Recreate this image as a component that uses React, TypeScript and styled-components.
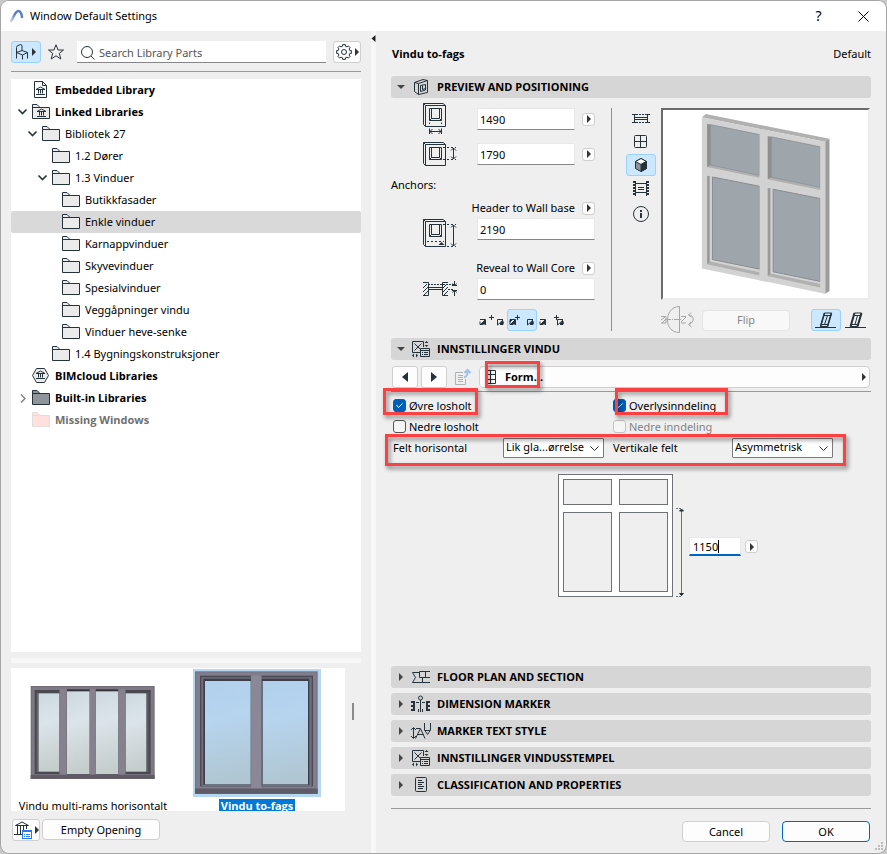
import React from 'react';
import styled, { createGlobalStyle, css } from 'styled-components';

const ink = '#26323a';
const FONT = '"Noto Sans", "Open Sans", "Liberation Sans", sans-serif';
const BOLD_FONT = '"Open Sans", "Noto Sans", "Liberation Sans", sans-serif';

const Global = createGlobalStyle`
  * { box-sizing: border-box; }
  body {
    margin: 0;
    background: #c9c9c9;
    font-family: ${FONT};
    font-size: 11px;
    line-height: 16px;
    color: #000;
  }
  button, input, select { font: inherit; color: inherit; }
`;

const bold = css`
  font-family: ${BOLD_FONT};
  font-weight: 700;
`;

/* ---------- window shell ---------- */

const Desktop = styled.div`
  display: flex;
  min-height: 100vh;
  padding: 1px;
`;

const Dialog = styled.main`
  position: relative;
  flex: 1;
  display: flex;
  flex-direction: column;
  min-width: 0;
  background: #efefef;
  border-radius: 8px;
  overflow: hidden;
  box-shadow: 0 0 0 1px #a6a6a6;
`;

const TitleBar = styled.header`
  display: flex;
  align-items: center;
  gap: 6px;
  height: 30px;
  padding-left: 8px;
  background: #fff;
`;

const WindowTitle = styled.h1`
  flex: 1;
  margin: 0;
  font-size: 11px;
  font-weight: 400;
`;

const CaptionButtons = styled.div`
  display: flex;
`;

const CaptionButton = styled.button`
  display: grid;
  place-items: center;
  width: 45px;
  height: 30px;
  padding: 0;
  border: 0;
  background: none;
  font-size: 14px;
`;

const Body = styled.div`
  flex: 1;
  display: grid;
  grid-template-columns: 370px 5px minmax(0, 1fr);
`;

const Splitter = styled.div`
  background: #f7f7f7;
`;

const SplitterArrow = styled.svg`
  display: block;
  margin-top: 4px;
`;

const Sidebar = styled.section`
  display: flex;
  flex-direction: column;
  padding: 10px 10px 12px;
`;

const Settings = styled.section`
  display: flex;
  flex-direction: column;
  padding: 0 15px 11px;
`;

const Rule = styled.hr<{ $top?: number }>`
  width: 100%;
  height: 1px;
  margin: ${p => p.$top ?? 0}px 0 0;
  border: 0;
  background: #999;
`;

/* ---------- controls ---------- */

const Icon = styled.svg`
  display: block;
  flex: none;
  fill: none;
  stroke: ${ink};
  overflow: visible;
`;

const selectedTool = css`
  border-color: #99d1ff;
  background: #cce8ff;
`;

const ToolButton = styled.button<{ $selected?: boolean; $framed?: boolean; $width?: number }>`
  display: flex;
  flex: none;
  align-items: center;
  justify-content: center;
  gap: 3px;
  width: ${p => p.$width ?? 30}px;
  height: 22px;
  padding: 0;
  border: 1px solid transparent;
  border-radius: 3px;
  background: none;
  ${p => p.$framed && css`border-color: #cfcfcf; background: #fdfdfd;`}
  ${p => p.$selected && selectedTool}
`;

const PushButton = styled.button<{ $width: number; $primary?: boolean }>`
  width: ${p => p.$width}px;
  height: 21px;
  padding: 0;
  border: 1px solid ${p => (p.$primary ? '#0067c0' : '#cfcfcf')};
  border-radius: 4px;
  background: #fdfdfd;
  line-height: 16px;
  &:disabled { border-color: #e4e4e4; background: #f8f8f8; color: #888; }
`;

const PopButton = styled.button`
  display: grid;
  place-items: center;
  flex: none;
  width: 13px;
  height: 13px;
  padding: 0;
  border: 1px solid #cfcfcf;
  border-radius: 3px;
  background: #fdfdfd;
`;

const TextField = styled.input`
  width: 100%;
  height: 22px;
  padding: 0 2px;
  border: 1px solid #e8e8e8;
  border-bottom-color: #868686;
  background: #fff;
  outline: 0;
`;

const Marker = styled.span<{ $inset: string }>`
  position: absolute;
  inset: ${p => p.$inset};
  border: 3px solid #fb4141;
  filter: drop-shadow(2px 3px 2px rgba(0, 0, 0, 0.45));
  pointer-events: none;
  z-index: 1;
`;

const TriRight = () => (
  <Icon width="4" height="8" viewBox="0 0 4 8"><path d="M0 0L4 4L0 8Z" fill="#333" stroke="none" /></Icon>
);

/* ---------- sidebar ---------- */

const SearchRow = styled.div`
  display: flex;
  align-items: center;
  gap: 7px;
  margin-bottom: 8px;
`;

const StarButton = styled(ToolButton)`
  margin-right: 6px;
`;

const SearchBox = styled.label`
  display: flex;
  flex: 1;
  align-items: center;
  gap: 4px;
  height: 22px;
  padding: 2px 0 0 4px;
  border-bottom: 1px solid #868686;
  background: #fff;
`;

const SearchInput = styled.input`
  flex: 1;
  min-width: 0;
  padding: 0;
  border: 0;
  outline: 0;
  background: none;
  &::placeholder { color: #555; opacity: 1; }
`;

const Tree = styled.ul`
  flex: 1;
  margin: 7px 0 0;
  padding: 0;
  background: #fff;
  list-style: none;
`;

const TreeRow = styled.li<{ $depth: number; $bold?: boolean; $selected?: boolean; $muted?: boolean }>`
  display: flex;
  align-items: center;
  gap: 4px;
  height: 22px;
  padding-left: ${p => 7 + p.$depth * 10}px;
  border-radius: 2px;
  background: ${p => (p.$selected ? '#d9d9d9' : 'none')};
  color: ${p => (p.$muted ? '#707070' : '#000')};
  ${p => p.$bold && bold}
`;

const TwistySlot = styled.span`
  width: 10px;
`;

const GlyphSlot = styled.span<{ $indent: number }>`
  width: 19px;
  padding-left: ${p => p.$indent}px;
`;

const Sash = styled.div`
  height: 5px;
  margin: 6px 0 5px;
  background: #f7f7f7;
`;

const GalleryRow = styled.div`
  display: flex;
  align-items: flex-start;
`;

const Gallery = styled.div`
  display: grid;
  grid-template-columns: 164px 164px;
  flex: none;
  width: 334px;
  height: 143px;
  overflow: hidden;
  background: #fff;
`;

const ScrollThumb = styled.div`
  width: 2px;
  height: 17px;
  margin: 35px 0 0 7px;
  background: #8a8a8a;
`;

const Thumb = styled.figure`
  display: flex;
  flex-direction: column;
  align-items: center;
  margin: 0;
  padding-top: 1px;
`;

const ThumbCaption = styled.figcaption<{ $selected?: boolean }>`
  margin-top: 2px;
  padding: 0 2px;
  line-height: 13px;
  white-space: nowrap;
  ${p => p.$selected && css`background: #0078d7; color: #fff; ${bold}`}
`;

const SidebarFooter = styled.div`
  display: flex;
  gap: 2px;
  margin: 8px 0 0 1px;
`;

type NodeIcon = 'doc' | 'lib' | 'folder' | 'cloud' | 'dark' | 'missing';
type TreeNode = { label: string; depth: number; icon: NodeIcon; open?: boolean; closed?: boolean; bold?: boolean; selected?: boolean };

const nodes: TreeNode[] = [
  { label: 'Embedded Library', depth: 0, icon: 'doc', bold: true },
  { label: 'Linked Libraries', depth: 0, icon: 'lib', open: true, bold: true },
  { label: 'Bibliotek 27', depth: 1, icon: 'folder', open: true },
  { label: '1.2 Dører', depth: 2, icon: 'folder' },
  { label: '1.3 Vinduer', depth: 2, icon: 'folder', open: true },
  { label: 'Butikkfasader', depth: 3, icon: 'folder' },
  { label: 'Enkle vinduer', depth: 3, icon: 'folder', selected: true },
  { label: 'Karnappvinduer', depth: 3, icon: 'folder' },
  { label: 'Skyvevinduer', depth: 3, icon: 'folder' },
  { label: 'Spesialvinduer', depth: 3, icon: 'folder' },
  { label: 'Veggåpninger vindu', depth: 3, icon: 'folder' },
  { label: 'Vinduer heve-senke', depth: 3, icon: 'folder' },
  { label: '1.4 Bygningskonstruksjoner', depth: 2, icon: 'folder' },
  { label: 'BIMcloud Libraries', depth: 0, icon: 'cloud', bold: true },
  { label: 'Built-in Libraries', depth: 0, icon: 'dark', closed: true, bold: true },
  { label: 'Missing Windows', depth: 0, icon: 'missing', bold: true },
];

const building = 'M0 3.5L4.5 1L9 3.5M0 3.5H9M2.5 4V7.5M4.5 4V7.5M6.5 4V7.5M0 8.5H9';

const NodeGlyph = ({ kind }: { kind: NodeIcon }) => {
  if (kind === 'doc')
    return (
      <Icon width="13" height="18" viewBox="0 0 13 18">
        <path d="M.5 .5H8.5L12.5 4.5V16.5H.5Z" fill="#fff" />
        <path d="M8.5 .5V4.5H12.5" />
        <path d={building} transform="translate(2 5)" />
      </Icon>
    );
  if (kind === 'cloud')
    return (
      <Icon width="17" height="16" viewBox="0 0 17 16">
        <path d="M4.5 .5H12.5L16.5 7.5L12.5 14.5H4.5L.5 7.5Z" fill="#ebebeb" />
        <path d={building} transform="translate(4 2)" />
      </Icon>
    );
  const fill = kind === 'dark' ? '#8e9499' : kind === 'missing' ? '#ffe0dc' : '#ebebeb';
  const stroke = kind === 'missing' ? '#e3dcdc' : ink;
  return (
    <Icon width="18" height="16" viewBox="0 0 18 16">
      <path d="M.5 14.5V.5H5L8 3.5H17.5V14.5Z" fill={fill} stroke={stroke} />
      <path d="M.5 3.5H8" stroke={stroke} />
      {kind === 'lib' && <path d={building} transform="translate(5 4)" />}
    </Icon>
  );
};

const Chair = () => (
  <Icon width="13" height="16" viewBox="0 0 13 16">
    <path d="M.5 14.5V3.5Q.5 2 2 1.500L4.500 .500Q6 .500 6 2V6.500M.500 8.500L6 6.500L11.500 8.500L6.500 11L.500 8.500M6.500 11V15.500M11.500 8.500V14.500" />
  </Icon>
);

const Star = () => (
  <Icon width="16" height="16" viewBox="0 0 16 16">
    <path d="M8 .8L10.100 6H15.500L11.300 9.400L12.800 15L8 11.800L3.200 15L4.700 9.400L.500 6H5.900Z" />
  </Icon>
);

const gearPath = Array.from({ length: 8 }, (_, i) => {
  const pt = (r: number, deg: number) => {
    const a = ((i * 45 + deg) * Math.PI) / 180;
    return `${(8 + r * Math.cos(a)).toFixed(2)} ${(8 + r * Math.sin(a)).toFixed(2)}`;
  };
  return `${i ? 'L' : 'M'}${pt(6, -13)}L${pt(7.5, -11)}L${pt(7.5, 11)}L${pt(6, 13)}`;
}).join('') + 'Z';

const Gear = () => (
  <Icon width="16" height="16" viewBox="0 0 16 16" strokeLinejoin="round">
    <path d={gearPath} />
    <circle cx="8" cy="8" r="2.5" />
  </Icon>
);

const MultiWindow = () => (
  <Icon width="128" height="128" viewBox="87 87 384 384">
    <defs>
      <linearGradient id="glassA" x1="0" y1="0" x2=".1" y2="1">
        <stop offset="0" stopColor="#cdd8df" /><stop offset=".4" stopColor="#dbe4ea" /><stop offset="1" stopColor="#c6cdcd" />
      </linearGradient>
    </defs>
    <g stroke="none">
      <rect x="92" y="138" width="372" height="279" fill="#716e78" />
      <rect x="95" y="141" width="366" height="262" fill="#7d7a85" />
      <rect x="104" y="150" width="75" height="252" fill="#4a4950" />
      <rect x="376" y="150" width="76" height="252" fill="#4a4950" />
      <rect x="200" y="148" width="70" height="255" fill="#35343a" />
      <rect x="286" y="148" width="70" height="255" fill="#35343a" />
      <rect x="110" y="158" width="6" height="238" fill="#68656e" />
      <rect x="440" y="158" width="6" height="238" fill="#5b5962" />
      <rect x="116" y="160" width="62" height="235" fill="url(#glassA)" />
      <rect x="201" y="154" width="68" height="248" fill="url(#glassA)" />
      <rect x="287" y="154" width="68" height="248" fill="url(#glassA)" />
      <rect x="377" y="160" width="62" height="235" fill="url(#glassA)" />
      <rect x="179" y="147" width="21" height="256" fill="#85828d" />
      <rect x="269" y="147" width="18" height="256" fill="#85828d" />
      <rect x="355" y="147" width="21" height="256" fill="#85828d" />
      <rect x="92" y="405" width="372" height="11" fill="#5f5c66" />
    </g>
  </Icon>
);

const TwoWindow = () => (
  <Icon width="128" height="128" viewBox="579 87 384 384">
    <defs>
      <linearGradient id="glassB" x1="0" y1="0" x2=".1" y2="1">
        <stop offset="0" stopColor="#b1d0ec" /><stop offset=".4" stopColor="#b6d4ee" /><stop offset="1" stopColor="#b0c6d2" />
      </linearGradient>
    </defs>
    <g stroke="none">
      <rect x="579" y="87" width="384" height="384" fill="#b5d7f2" />
      <rect x="585" y="94" width="368" height="368" fill="#74727f" />
      <rect x="588" y="97" width="362" height="348" fill="#807e8c" />
      <rect x="600" y="107" width="153" height="332" fill="#4a4b57" />
      <rect x="784" y="107" width="155" height="332" fill="#4a4b57" />
      <rect x="604" y="112" width="149" height="327" fill="#716f7d" />
      <rect x="785" y="112" width="150" height="327" fill="#716f7d" />
      <rect x="610" y="116" width="143" height="318" fill="#3c3e49" />
      <rect x="786" y="116" width="142" height="318" fill="#3c3e49" />
      <rect x="615" y="123" width="137" height="310" fill="url(#glassB)" />
      <rect x="788" y="123" width="136" height="310" fill="url(#glassB)" />
      <rect x="754" y="107" width="30" height="338" fill="#8a8896" />
      <rect x="585" y="446" width="368" height="15" fill="#5d5b68" />
    </g>
  </Icon>
);

const LibraryManager = () => (
  <Icon width="18" height="18" viewBox="0 0 18 18">
    <path d="M1.500 4.500L8 1L14.500 4.500ZM3.500 5V13M6.500 5V13M9.500 5V9M12.500 5V8M0 13.500H8" />
    <rect x="8.500" y="9.500" width="9" height="8" fill="#fff" stroke="#2a78ee" />
    <path d="M8.500 10.500H17.500M10 13.500H11M12 13.500H16M10 15.500H11M12 15.500H16" stroke="#2a78ee" />
  </Icon>
);

const LibraryPanel = () => (
  <Sidebar>
    <SearchRow>
      <ToolButton $selected aria-label="Library view"><Chair /><TriRight /></ToolButton>
      <StarButton $width={16} aria-label="Favorites"><Star /></StarButton>
      <SearchBox>
        <Icon width="14" height="14" viewBox="0 0 14 14"><circle cx="6" cy="6" r="5.5" /><path d="M10 10L13.500 13.500" /></Icon>
        <SearchInput placeholder="Search Library Parts" aria-label="Search Library Parts" />
      </SearchBox>
      <ToolButton $framed $width={28} aria-label="Search settings"><Gear /><TriRight /></ToolButton>
    </SearchRow>
    <Rule />
    <Tree>
      {nodes.map(n => (
        <TreeRow key={n.label} $depth={n.depth} $bold={n.bold} $selected={n.selected} $muted={n.icon === 'missing'}>
          <TwistySlot>
            {n.open && <Icon width="9" height="6" viewBox="0 0 9 6" strokeWidth="1.6"><path d="M.5 .5L4.500 4.500L8.500 .500" /></Icon>}
            {n.closed && <Icon width="10" height="9" viewBox="0 0 10 9" strokeWidth="1.500"><path d="M3 .500L7 4.500L3 8.500" stroke="#858585" /></Icon>}
          </TwistySlot>
          <GlyphSlot $indent={n.icon === 'doc' ? 2 : 0}><NodeGlyph kind={n.icon} /></GlyphSlot>
          {n.label}
        </TreeRow>
      ))}
    </Tree>
    <Sash />
    <GalleryRow>
      <Gallery>
        <Thumb><MultiWindow /><ThumbCaption>Vindu multi-rams horisontalt</ThumbCaption></Thumb>
        <Thumb><TwoWindow /><ThumbCaption $selected>Vindu to-fags</ThumbCaption></Thumb>
      </Gallery>
      <ScrollThumb />
    </GalleryRow>
    <SidebarFooter>
      <ToolButton $framed $width={28} aria-label="Library manager"><LibraryManager /><TriRight /></ToolButton>
      <PushButton $width={118}>Empty Opening</PushButton>
    </SidebarFooter>
  </Sidebar>
);

/* ---------- settings: headers ---------- */

const PartHeading = styled.div`
  display: flex;
  align-items: center;
  justify-content: space-between;
  height: 45px;
  padding-left: 1px;
`;

const PartName = styled.h2`
  margin: 0;
  font-size: 11px;
  ${bold}
`;

const SectionBar = styled.button`
  display: flex;
  flex: none;
  align-items: center;
  width: 100%;
  height: 22px;
  padding: 0 0 0 5px;
  border: 0;
  border-radius: 3px;
  background: #d6d6d6;
  text-align: left;
  ${bold}
`;

const BarArrow = styled.span`
  display: grid;
  place-items: center;
  width: 10px;
`;

const BarIcon = styled.span`
  display: grid;
  place-items: center;
  width: 20px;
  margin: 0 6px 0 5px;
`;

const PreviewIcon = () => (
  <Icon width="14" height="16" viewBox="0 0 14 16">
    <path d="M.5 3.500L4.500 4.500V15.500L.500 12.500ZM.500 3.500L9 .500L13.500 1.500V13.500L4.500 15.500M4.500 4.500L13.500 1.500" />
    <path d="M6.500 6.500L11.500 5.500V11L6.500 12.500ZM8.500 6.500V10.500L11.500 9.500" />
  </Icon>
);
const ParamsIcon = () => (
  <Icon width="18" height="16" viewBox="0 0 18 16">
    <path d="M8 11.500H.500V.500H11.500V6M2.500 2.500L9.500 9.500M9.500 2.500L2.500 9.500" />
    <path d="M8.500 7.500H17.500V15.500H8.500ZM8.500 9.500H17.500M10 11.500H11M12 11.500H16M10 13.500H11M12 13.500H16" />
    <path d="M12.500 2L14.500 0L16.500 2ZM12.500 4L14.500 6L16.500 4ZM2 12.500L0 14.500L2 16.500ZM4 12.500L6 14.500L4 16.500Z" fill={ink} stroke="none" />
  </Icon>
);
const FloorIcon = () => (
  <Icon width="18" height="12" viewBox="0 0 18 12">
    <path d="M8 1.500H.500L3.500 6.500L.500 11.500H18M7.500 .500V6.500H18M7.500 .500H18M13.500 .500V6.500M10.500 6.500V11.500" />
  </Icon>
);
const DimensionIcon = () => (
  <Icon width="20" height="16" viewBox="0 0 20 16">
    <circle cx="9.500" cy="2" r="2" />
    <path d="M9.500 4V16M7.500 13V16M11.500 13V16M5 6.500H8M11 6.500H14" />
    <path d="M0 5H4V15H0V13H2V11H0V9H2V7H0ZM15 5H19V7H17V9H19V11H17V13H19V15H15Z" fill={ink} stroke="none" />
  </Icon>
);
const MarkerTextIcon = () => (
  <Icon width="20" height="16" viewBox="0 0 20 16">
    <path d="M2.500 5V15M0 7L2.500 4.500L5 7M0 13L2.500 15.500L5 13M5 5.500H9M4.500 15.500L9.500 5.500L14 15.500M6.500 11.500H12.500" />
    <path d="M13.500 0V7L16.500 11.500L19.500 7V0M14 7.500H19" />
  </Icon>
);
const DocIcon = () => (
  <Icon width="12" height="16" viewBox="0 0 12 16">
    <rect x=".5" y=".5" width="11" height="14" rx="1" />
    <path d="M3 3.500H7M3 5.500H9M3 7.500H7M3 9.500H9M3 11.500H8" />
  </Icon>
);

const Section = ({ title, icon, open }: { title: string; icon: React.ReactNode; open?: boolean }) => (
  <SectionBar aria-expanded={!!open}>
    <BarArrow>
      <Icon width="8" height="8" viewBox="0 0 8 8">
        <path d={open ? 'M0 2H8L4 6Z' : 'M2 0L6 4L2 8Z'} fill="#444" stroke="none" />
      </Icon>
    </BarArrow>
    <BarIcon>{icon}</BarIcon>
    {title}
  </SectionBar>
);

/* ---------- settings: preview and positioning ---------- */

const Positioning = styled.div`
  display: grid;
  grid-template-columns: 221px 48px minmax(0, 1fr);
  align-items: start;
  padding: 10px 0 4px;
`;

const SizeForm = styled.div`
  display: grid;
  grid-template-columns: 86px 98px 20px;
  grid-template-rows: 22px 13px 22px 12px 16px 7px 16px 2px 22px 7px 13px 16px 2px 22px 9px 22px;
  border-right: 1px solid #8f8f8f;
`;

const Place = styled.div<{ $row: string; $col: string; $align?: string }>`
  display: flex;
  grid-row: ${p => p.$row};
  grid-column: ${p => p.$col};
  align-items: center;
  justify-content: ${p => p.$align ?? 'flex-start'};
  white-space: nowrap;
`;

const IconPlace = styled(Place)`
  padding-left: 32px;
`;

const LabelPlace = styled(Place)`
  justify-content: flex-end;
`;

const AnchorRow = styled.div`
  display: flex;
  align-items: center;
`;

const ViewColumn = styled.div`
  display: flex;
  flex-direction: column;
  gap: 1px;
  padding-left: 14px;
`;

const InfoButton = styled(ToolButton)`
  margin-top: 3px;
`;

const ViewFrame = styled.div`
  height: 192px;
  margin-right: 1px;
  border: 2px solid #ececec;
  border-top-color: #6b6b6b;
  border-left-color: #6b6b6b;
  background: #fff;
`;

const ViewSvg = styled.svg`
  display: block;
  width: 100%;
  height: 100%;
`;

const FlipRow = styled.div`
  display: flex;
  align-items: center;
  gap: 7px;
  margin-top: 6px;
`;

const SlantGroup = styled.div`
  display: flex;
  margin-left: auto;
`;

const WallHole = ({ drop = 0 }: { drop?: number }) => (
  <>
    <path d={`M2.500 2.500H22.500V${23.5 + drop}H2.500ZM2.500 2.500L.500 .500H20L22.500 2.500M.500 .500V${21.5 + drop}L2.500 ${23.5 + drop}`} />
    <path d="M6.500 5.500H18.500V17.500H6.500ZM8.500 5.500V15.500M16.500 5.500V15.500M6.500 17.500L8.500 15.500H16.500L18.500 17.500" />
  </>
);

const WidthIcon = () => (
  <Icon width="24" height="32" viewBox="0 0 24 32">
    <WallHole />
    <path d="M6.500 19.500V21M18.500 19.500V21M6.500 25.500V31M18.500 25.500V31M7 28.500H18M9.500 26L7 28.500L9.500 31M15.500 26L18 28.500L15.500 31" />
  </Icon>
);
const HeightIcon = () => (
  <Icon width="34" height="24" viewBox="0 0 34 24">
    <WallHole />
    <path d="M20 5.500H33M20 17.500H33" strokeDasharray="2 2" />
    <path d="M30.500 6V17M28 8.500L30.500 6L33 8.500M28 14.500L30.500 17L33 14.500" />
  </Icon>
);
const HeaderIcon = () => (
  <Icon width="34" height="28" viewBox="0 0 34 28">
    <WallHole drop={4} />
    <path d="M20 5.500H33M4 22.500H21M24 27.500H33" strokeDasharray="2 2" />
    <path d="M30.500 6V27M28 8.500L30.500 6L33 8.500M28 24.500L30.500 27L33 24.500" />
    <path d="M15.500 26L18.500 23L21.500 26Z" fill={ink} stroke="none" />
  </Icon>
);
const RevealIcon = () => (
  <Icon width="34" height="16" viewBox="0 0 34 16">
    <path d="M0 1.500H5.500V14.500H0M25 1.500H19.500V14.500H25M5.500 6.500H20M5.500 8.500H20M0 7L4 3M0 11L5 6M1 14L5 10M20 7L24 3M20 11L25 6M21 14L25 10" />
    <path d="M5 3.500H31M25 8.500H31" strokeDasharray="2 1" />
    <path d="M31.500 0V5M31.500 9V15M29 4.500H34M29 9.500H34M29.500 2.500L31.500 5L33.500 2.500M29.500 11.500L31.500 9L33.500 11.500" />
  </Icon>
);

const AnchorIcon = ({ cross, near }: { cross: number; near?: boolean }) => (
  <Icon width="26" height="10" viewBox="0 0 26 10">
    <path d="M1 4.500H6.500V10M1 10L6 5M1 6.500V9.500H4" />
    <path d="M24 4.500H18.500V10M18.500 10L24 5M21 9.500H24V7" />
    <path d="M3 9L6 6V9ZM21 9L24 6V9Z" fill={ink} />
    {near && <path d="M1 4.500V7L3.500 4.500Z" fill={ink} />}
    <path d={`M${cross} 0V5M${cross - 2.5} 2.500H${cross + 2.5}`} />
  </Icon>
);

const PlanView = () => (
  <Icon width="18" height="10" viewBox="0 0 18 10">
    <path d="M0 .5H4M0 8.500H4M14 .500H18M14 8.500H18M2.500 .500V8.500M15.500 .500V8.500M3 3.500H15M3 5.500H15" />
    <path d="M4 .5H14M4 8.500H14" strokeDasharray="2 1" />
  </Icon>
);
const ElevationView = () => (
  <Icon width="14" height="14" viewBox="0 0 14 14"><rect x=".5" y=".5" width="12" height="12" rx="1" /><path d="M6.500 .5V12.500M.500 6.500H12.500" /></Icon>
);
const CubeView = () => (
  <Icon width="12" height="14" viewBox="0 0 12 14">
    <path d="M6 .5L11.500 3.500V10.500L6 13.500L.500 10.500V3.500Z" fill="#8d959b" />
    <path d="M.5 3.500L6 .500L11.500 3.500L6 6.500Z" fill="#fff" />
    <path d="M6 6.500L11.500 3.500V10.500L6 13.500Z" fill={ink} />
  </Icon>
);
const FilmView = () => (
  <Icon width="16" height="16" viewBox="0 0 16 16">
    <path d="M1 1V16M15 1V16" strokeWidth="2" strokeDasharray="2 1" />
    <path d="M2.500 1V16M13.500 1V16M3 3.500H13M3 12.500H13M5 7.500H11M5 9.500H11" />
  </Icon>
);
const InfoView = () => (
  <Icon width="16" height="16" viewBox="0 0 16 16">
    <circle cx="8" cy="8" r="7.500" /><path d="M8 7V12M8 4V6" strokeWidth="2" />
  </Icon>
);
const OpeningIcon = () => (
  <Icon width="34" height="28" viewBox="0 0 34 28">
    <g stroke="#a6a6a6">
      <path d="M18.500 .500C10 .500 6.500 8 6.500 14S10 26.500 18.500 26.500ZM0 10.500H5V17H0M0 14L4 11M1 17L5 13M20 10.500H25M20 17H25M20 16L25 11" />
      <path d="M5 13.500H20" strokeDasharray="5 1 1 1" />
      <path d="M28 9C33 9 34 16 28 18.500M30 6.500L27.500 9L30.500 11M30 16L27.500 18.500L30.500 21" />
    </g>
  </Icon>
);
const SlantIcon = ({ tight }: { tight?: boolean }) => (
  <Icon width="22" height="16" viewBox="0 0 22 16">
    <path d="M0 15.500H21" />
    <path d="M9.500 1H16.500L12.500 14.500H5.500ZM9 3.500H16M6 12.500H13" />
    <path d={tight ? 'M12.500 3.500L9.500 12.500' : 'M12.500 3.500L10 12.500'} />
    <path d="M9.500 1L5.500 14.500M16.500 1L12.500 14.500" strokeWidth={tight ? 1.5 : 2} />
  </Icon>
);

const Preview3D = () => (
  <ViewSvg viewBox="99 120 618 567" role="img" aria-label="3D preview">
    <path d="M216 142L228 132L601 207L588 216Z" fill="#b0b0b0" />
    <path d="M588 216L601 207V666L588 674Z" fill="#9c9c9c" />
    <path d="M216 142L588 216V674L216 598Z" fill="#d2d2d2" />
    <path d="M232 162L390 194V324L232 292Z" fill="#b0b0b0" />
    <path d="M232 162L242 164V286L232 292Z" fill="#8f8f8f" />
    <path d="M242 164L390 194V317L242 286Z" fill="#9ea5ab" stroke="#888d92" strokeWidth="2" />
    <path d="M414 199L573 231V361L414 329Z" fill="#b0b0b0" />
    <path d="M414 199L426 201V323L414 329Z" fill="#8f8f8f" />
    <path d="M426 201L573 231V353L426 323Z" fill="#9ea5ab" stroke="#888d92" strokeWidth="2" />
    <path d="M232 318L390 350V619L232 585Z" fill="#b0b0b0" />
    <path d="M232 318L240 320V577L232 585Z" fill="#999" />
    <path d="M240 320L390 350V609L240 577Z" fill="#d2d2d2" />
    <path d="M248 322L390 350V600L248 571Z" fill="#9ea5ab" stroke="#888d92" strokeWidth="3" />
    <path d="M414 355L573 387V655L414 621Z" fill="#b0b0b0" />
    <path d="M414 355L423 357V613L414 621Z" fill="#999" />
    <path d="M423 357L573 387V645L423 613Z" fill="#d2d2d2" />
    <path d="M431 359L573 387V637L431 608Z" fill="#9ea5ab" stroke="#888d92" strokeWidth="3" />
    <path d="M390 177L414 182V639L390 634ZM573 213L588 216V674L573 671Z" fill="#d2d2d2" />
  </ViewSvg>
);

const ViewPane = styled.div`
  min-width: 0;
  padding-left: 1px;
`;

const PositioningPanel = () => (
  <Positioning>
    <SizeForm>
      <IconPlace $row="1" $col="1"><WidthIcon /></IconPlace>
      <Place $row="1" $col="2"><TextField defaultValue="1490" aria-label="Width" /></Place>
      <Place $row="1" $col="3" $align="flex-end"><PopButton aria-label="Width options"><TriRight /></PopButton></Place>
      <IconPlace $row="3" $col="1"><HeightIcon /></IconPlace>
      <Place $row="3" $col="2"><TextField defaultValue="1790" aria-label="Height" /></Place>
      <Place $row="3" $col="3" $align="flex-end"><PopButton aria-label="Height options"><TriRight /></PopButton></Place>
      <Place $row="5" $col="1">Anchors:</Place>
      <LabelPlace $row="7" $col="1 / span 2"><label htmlFor="header">Header to Wall base</label></LabelPlace>
      <Place $row="7" $col="3" $align="flex-end"><PopButton aria-label="Header options"><TriRight /></PopButton></Place>
      <IconPlace $row="9 / span 2" $col="1"><HeaderIcon /></IconPlace>
      <Place $row="9" $col="2 / span 2"><TextField id="header" defaultValue="2190" /></Place>
      <LabelPlace $row="12" $col="1 / span 2"><label htmlFor="reveal">Reveal to Wall Core</label></LabelPlace>
      <Place $row="12" $col="3" $align="flex-end"><PopButton aria-label="Reveal options"><TriRight /></PopButton></Place>
      <IconPlace $row="14" $col="1"><RevealIcon /></IconPlace>
      <Place $row="14" $col="2 / span 2"><TextField id="reveal" defaultValue="0" /></Place>
      <Place $row="16" $col="2 / span 2">
        <AnchorRow>
          <ToolButton aria-label="Anchor outside"><AnchorIcon cross={12.5} /></ToolButton>
          <ToolButton $selected aria-label="Anchor core"><AnchorIcon cross={8.5} near /></ToolButton>
          <ToolButton aria-label="Anchor inside"><AnchorIcon cross={17.5} /></ToolButton>
        </AnchorRow>
      </Place>
    </SizeForm>
    <ViewColumn>
      <ToolButton aria-label="Plan view"><PlanView /></ToolButton>
      <ToolButton aria-label="Elevation view"><ElevationView /></ToolButton>
      <ToolButton $selected aria-label="3D view"><CubeView /></ToolButton>
      <ToolButton aria-label="Picture view"><FilmView /></ToolButton>
      <InfoButton aria-label="Information"><InfoView /></InfoButton>
    </ViewColumn>
    <ViewPane>
      <ViewFrame><Preview3D /></ViewFrame>
      <FlipRow>
        <OpeningIcon />
        <PushButton $width={88} disabled>Flip</PushButton>
        <SlantGroup>
          <ToolButton $selected aria-label="Slanted"><SlantIcon tight /></ToolButton>
          <ToolButton aria-label="Vertical"><SlantIcon /></ToolButton>
        </SlantGroup>
      </FlipRow>
    </ViewPane>
  </Positioning>
);

/* ---------- settings: window parameters ---------- */

const PageRow = styled.div`
  display: flex;
  gap: 3px;
  margin: 6px 1px 3px;
`;

const PageSelect = styled.button`
  display: flex;
  flex: 1;
  align-items: center;
  justify-content: space-between;
  height: 22px;
  padding: 0 3px 0 6px;
  border: 1px solid #cfcfcf;
  border-radius: 4px;
  background: #fdfdfd;
  ${bold}
`;

const PageName = styled.span`
  position: relative;
  display: flex;
  align-items: center;
  gap: 9px;
  height: 20px;
`;

const Options = styled.div`
  position: relative;
  display: grid;
  grid-template-columns: 110px 110px 119px 101px;
  grid-auto-rows: 21px;
  align-items: center;
  margin-top: 3px;
  padding-left: 2px;
`;

const Check = styled.label<{ $disabled?: boolean }>`
  position: relative;
  display: flex;
  grid-column: span 2;
  align-items: center;
  gap: 3px;
  height: 21px;
  color: ${p => (p.$disabled ? '#838383' : '#000')};
`;

const CheckInput = styled.input`
  appearance: none;
  width: 13px;
  height: 13px;
  margin: 0;
  border: 1px solid #555;
  border-radius: 3px;
  background: #f5f5f5;
  &:disabled { border-color: #c3c3c3; }
  &:checked {
    border-color: #005fb8;
    background: #005fb8;
  }
`;

const CheckSlot = styled.span`
  position: relative;
  display: flex;
`;

const Tick = styled(Icon)`
  position: absolute;
  left: 3px;
  top: 4px;
  stroke: #fff;
  pointer-events: none;
`;

const SelectSlot = styled.span`
  position: relative;
  display: block;
  width: 101px;
`;

const Select = styled.select`
  appearance: none;
  display: block;
  width: 100%;
  height: 20px;
  padding: 0 0 2px 2px;
  border: 1px solid #7a7a7a;
  border-radius: 1px;
  background: #fff;
`;

const Chevron = styled(Icon)`
  position: absolute;
  right: 5px;
  top: 8px;
  pointer-events: none;
`;

const CheckOption = ({ label, on, disabled, mark }: { label: string; on?: boolean; disabled?: boolean; mark?: string }) => (
  <Check $disabled={disabled}>
    <CheckSlot>
      <CheckInput type="checkbox" defaultChecked={on} disabled={disabled} />
      {on && <Tick width="7" height="5" viewBox="0 0 7 5"><path d="M.500 2L2.500 4.500L6.500 .500" /></Tick>}
    </CheckSlot>
    {label}
    {mark && <Marker $inset={mark} />}
  </Check>
);

const Dropdown = ({ id, value }: { id: string; value: string }) => (
  <SelectSlot>
    <Select id={id} defaultValue={value}><option>{value}</option></Select>
    <Chevron width="9" height="5" viewBox="0 0 9 5"><path d="M.500 .500L4.500 4.500L8.500 .500" /></Chevron>
  </SelectSlot>
);

const Schematic = styled.div`
  display: flex;
  align-items: center;
  margin-top: 16px;
  padding-left: 167px;
`;

const HeightField = styled.span`
  position: relative;
  display: flex;
  width: 52px;
  margin: 22px 4px 0 3px;
`;

const ActiveField = styled(TextField)`
  height: 19px;
  padding: 0 3px;
  border-bottom: 2px solid #0067c0;
  caret-color: transparent;
`;

const Caret = styled.i`
  position: absolute;
  left: 29px;
  top: 3px;
  width: 1px;
  height: 13px;
  background: #000;
`;

const PopSlot = styled.span`
  display: flex;
  margin-top: 22px;
`;

const DividerDrawing = () => (
  <Icon width="115" height="123" viewBox="0 0 115 123">
    <rect x=".5" y=".5" width="114" height="122" fill="#fff" stroke="#6f7275" />
    <g fill="#efefef" stroke="#6f7275">
      <rect x="5.500" y="5.500" width="48" height="25" />
      <rect x="61.500" y="5.500" width="48" height="25" />
      <rect x="5.500" y="38.500" width="48" height="79" />
      <rect x="61.500" y="38.500" width="48" height="79" />
    </g>
  </Icon>
);
const HeightArrow = () => (
  <Icon width="13" height="123" viewBox="0 0 13 123">
    <path d="M3 34.500H5M6 34.500H8M3 122.500H5M6 122.500H8M8.500 36V122" stroke="#6f7275" />
    <path d="M6.500 37L8.500 35L10.500 37ZM6.500 119.500L8.500 121.500L10.500 119.500Z" fill={ink} stroke={ink} />
  </Icon>
);

const Spacer = styled.div`
  flex: 1;
  min-height: 16px;
`;

const SectionStack = styled.div`
  display: grid;
  gap: 5px;
`;

const Footer = styled.footer`
  display: flex;
  justify-content: flex-end;
  gap: 12px;
  margin: 12px 1px 0;
`;

const Grip = styled.svg`
  position: absolute;
  right: 3px;
  bottom: 3px;
  fill: #bcbcbc;
`;

const ParametersPanel = () => (
  <>
    <PageRow>
      <ToolButton $framed $width={26} aria-label="Previous page">
        <Icon width="6" height="10" viewBox="0 0 6 10"><path d="M6 0V10L0 5Z" fill={ink} stroke="none" /></Icon>
      </ToolButton>
      <ToolButton $framed $width={26} aria-label="Next page">
        <Icon width="6" height="10" viewBox="0 0 6 10"><path d="M0 0V10L6 5Z" fill={ink} stroke="none" /></Icon>
      </ToolButton>
      <ToolButton $width={26} disabled aria-label="Go to parent page">
        <Icon width="16" height="16" viewBox="0 0 16 16">
          <path d="M8 3.500H.500V15.500H10.500V10M3 6.500H8M3 8.500H8M3 10.500H8M3 12.500H8" stroke="#aeb2b5" />
          <path d="M9 8C12 8 12.500 6 12.500 2M9.500 4L12.500 1L15.500 4" stroke="#9fbfee" strokeWidth="2" />
        </Icon>
      </ToolButton>
      <PageSelect>
        <PageName>
          <Icon width="10" height="14" viewBox="0 0 10 14"><path d="M.500 .500H9.500V13.500H.500ZM4.500 .500V13.500M.500 4.500H9.500M.500 9.500H9.500" /></Icon>
          Form...
          <Marker $inset="-6px 3px -1px -1px" />
        </PageName>
        <TriRight />
      </PageSelect>
    </PageRow>
    <Rule />
    <Options>
      <CheckOption label="Øvre losholt" on mark="-7px 135px 1px -10px" />
      <CheckOption label="Overlysinndeling" on mark="-7px 105px 1px 2px" />
      <CheckOption label="Nedre losholt" />
      <CheckOption label="Nedre inndeling" disabled />
      <label htmlFor="horizontal">Felt horisontal</label>
      <Dropdown id="horizontal" value="Lik gla...ørrelse" />
      <label htmlFor="vertical">Vertikale felt</label>
      <Dropdown id="vertical" value="Asymmetrisk" />
      <Marker $inset="39px 25px -8px -6px" />
    </Options>
    <Schematic>
      <DividerDrawing />
      <HeightArrow />
      <HeightField>
        <ActiveField defaultValue="1150" aria-label="Field height" />
        <Caret />
      </HeightField>
      <PopSlot><PopButton aria-label="Field height options"><TriRight /></PopButton></PopSlot>
    </Schematic>
  </>
);

const Logo = () => (
  <Icon width="15" height="14" viewBox="0 0 15 14">
    <defs>
      <linearGradient id="arch" x1="0" y1="1" x2="1" y2="0">
        <stop offset="0" stopColor="#c5d3ee" /><stop offset=".5" stopColor="#5b7fc7" /><stop offset="1" stopColor="#5b7fc7" />
      </linearGradient>
    </defs>
    <path d="M2 12C5 9 5.500 2 9.500 2C12 2 12.500 5 13 8" stroke="url(#arch)" strokeWidth="2.500" strokeLinecap="round" />
  </Icon>
);

export default function App() {
  return (
    <>
      <Global />
      <Desktop>
        <Dialog>
          <TitleBar>
            <Logo />
            <WindowTitle>Window Default Settings</WindowTitle>
            <CaptionButtons>
              <CaptionButton aria-label="Help">?</CaptionButton>
              <CaptionButton aria-label="Close">
                <Icon width="11" height="11" viewBox="0 0 11 11"><path d="M.500 .500L10.500 10.500M10.500 .500L.500 10.500" stroke="#000" /></Icon>
              </CaptionButton>
            </CaptionButtons>
          </TitleBar>
          <Body>
            <LibraryPanel />
            <Splitter>
              <SplitterArrow width="5" height="7" viewBox="0 0 5 7"><path d="M4.500 0V7L.500 3.500Z" fill="#222" /></SplitterArrow>
            </Splitter>
            <Settings>
              <PartHeading><PartName>Vindu to-fags</PartName><span>Default</span></PartHeading>
              <Section title="PREVIEW AND POSITIONING" icon={<PreviewIcon />} open />
              <PositioningPanel />
              <Section title="INNSTILLINGER VINDU" icon={<ParamsIcon />} open />
              <ParametersPanel />
              <Spacer />
              <SectionStack>
                <Section title="FLOOR PLAN AND SECTION" icon={<FloorIcon />} />
                <Section title="DIMENSION MARKER" icon={<DimensionIcon />} />
                <Section title="MARKER TEXT STYLE" icon={<MarkerTextIcon />} />
                <Section title="INNSTILLINGER VINDUSSTEMPEL" icon={<ParamsIcon />} />
                <Section title="CLASSIFICATION AND PROPERTIES" icon={<DocIcon />} />
              </SectionStack>
              <Rule $top={12} />
              <Footer>
                <PushButton $width={88}>Cancel</PushButton>
                <PushButton $width={88} $primary>OK</PushButton>
              </Footer>
            </Settings>
          </Body>
          <Grip width="8" height="8" viewBox="0 0 8 8"><path d="M6 0H8V2H6ZM3 3H5V5H3ZM6 3H8V5H6ZM0 6H2V8H0ZM3 6H5V8H3ZM6 6H8V8H6Z" /></Grip>
        </Dialog>
      </Desktop>
    </>
  );
}
